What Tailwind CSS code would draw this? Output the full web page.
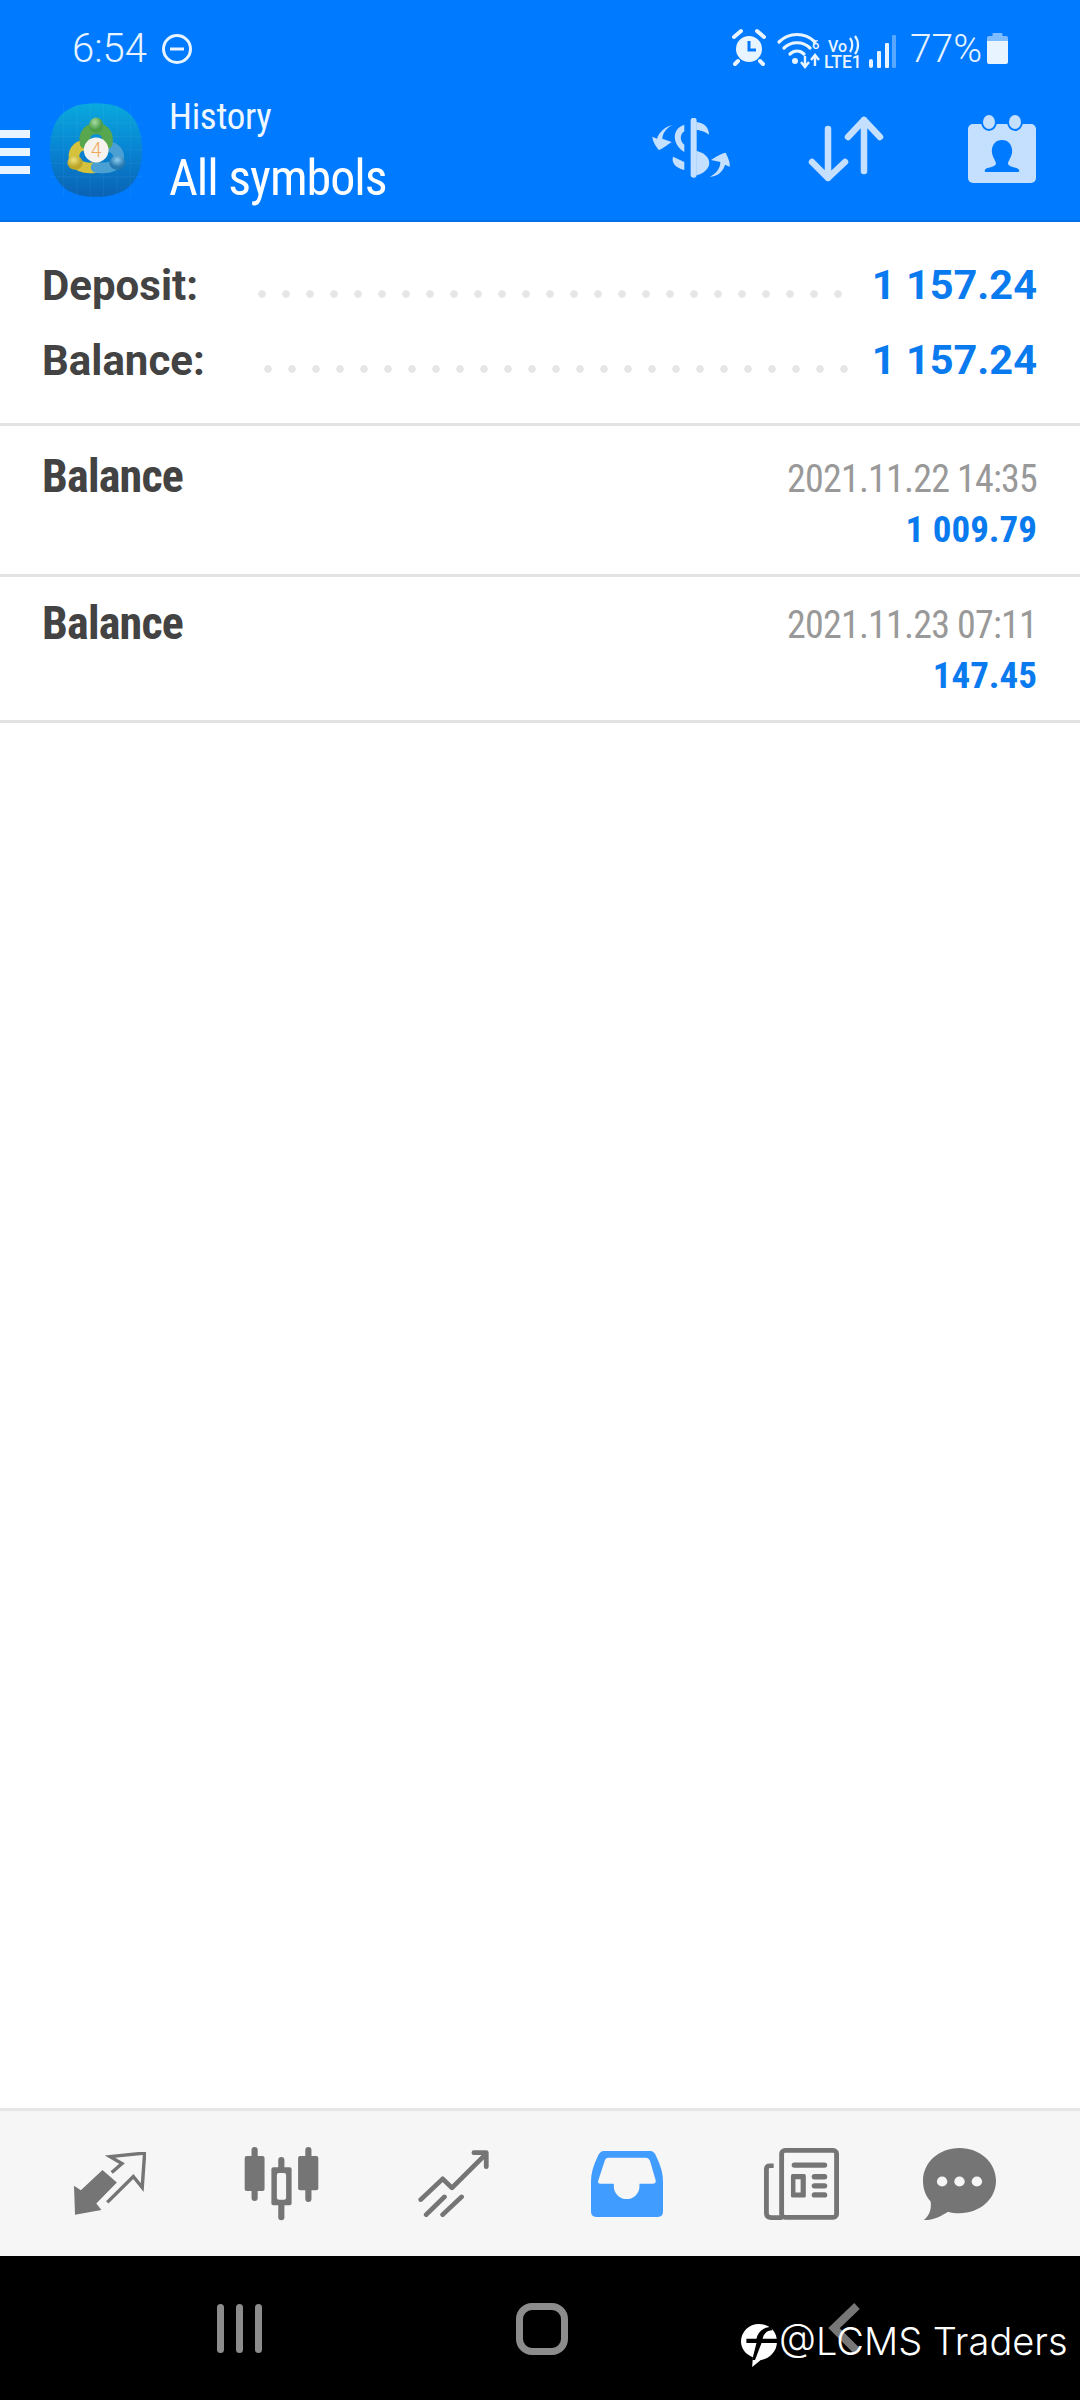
<!DOCTYPE html>
<html lang="en">
<head>
  <meta charset="UTF-8">
  <title>History</title>
  <script src="https://cdn.jsdelivr.net/npm/@tailwindcss/browser@4"></script>
</head>
<body class="[font-family:Roboto,sans-serif] bg-white">
<div class="relative w-[1080px] h-[2400px] flex flex-col overflow-hidden bg-white">

  <!-- Blue header -->
  <header class="h-[222px] bg-[#007aff] border-b-2 border-[#0670e8] shrink-0">
    <!-- Status bar -->
    <div class="h-[90px] flex text-[#e8f4ff]">
      <span class="ml-[72px] mt-[26px] text-[40px] leading-[46px] [font-weight:350]">6:54</span>
      <svg class="ml-[14px] mt-[33px]" width="32" height="32" viewBox="0 0 32 32" fill="none" stroke="#e8f4ff" stroke-width="3"><circle cx="16" cy="16" r="13.5"/><path d="M9 16H23"/></svg>
      <svg class="ml-[526px] mt-[20px]" width="200" height="60" viewBox="0 0 200 60">
        <!-- alarm -->
        <circle cx="30" cy="29" r="13" fill="#e8f4ff"/>
        <path d="M30 21V30H37" fill="none" stroke="#007aff" stroke-width="3"/>
        <path d="M15 17L22 11M45 17L38 11M19 41L16 44M41 41L44 44" stroke="#e8f4ff" stroke-width="4" stroke-linecap="round"/>
        <!-- wifi -->
        <g fill="none" stroke="#e8f4ff" stroke-width="3.2" stroke-linecap="round">
          <path d="M60 22C70 12 86 12 96 22"/>
          <path d="M65 28C72 21 84 21 91 28"/>
          <path d="M71 34C75 30 81 30 85 34"/>
        </g>
        <circle cx="76" cy="41" r="3" fill="#e8f4ff"/>
        <path d="M86 36V46M82 42L86 47L90 42M96 46V36M92 40L96 35L100 40" fill="none" stroke="#e8f4ff" stroke-width="2.4"/>
        <text x="93" y="29" font-size="13" font-weight="500" fill="#e8f4ff">6</text>
        <text x="109" y="32" font-size="16" font-weight="500" fill="#e8f4ff">Vo</text>
        <path d="M131 18C134 22 134 28 131 32M136 16C140 21 140 29 136 34" fill="none" stroke="#e8f4ff" stroke-width="2.2"/>
        <text x="105" y="48" font-size="17.5" font-weight="500" fill="#e8f4ff">LTE1</text>
        <!-- signal -->
        <rect x="150" y="39" width="4" height="9" rx="2" fill="#e8f4ff"/>
        <rect x="158" y="31" width="4" height="17" rx="1" fill="#e8f4ff"/>
        <rect x="166" y="23" width="4" height="25" rx="1" fill="#e8f4ff"/>
        <rect x="173" y="15" width="4" height="33" rx="1" fill="#58a8ff"/>
      </svg>
      <span class="-ml-[9px] mt-[26px] text-[39px] leading-[46px] font-light">77%</span>
      <svg class="ml-[5px] mt-[33px]" width="21" height="32" viewBox="0 0 21 32"><rect x="5.5" y="0" width="10" height="5" rx="1" fill="#7cbcff"/><path d="M2 3H19a2 2 0 0 1 2 2V8H0V5a2 2 0 0 1 2-2Z" fill="#7cbcff"/><path d="M0 8H21V29a2 2 0 0 1-2 2H2a2 2 0 0 1-2-2Z" fill="#e8f4ff"/></svg>
    </div>
    <!-- Toolbar -->
    <div class="h-[130px] flex items-start">
      <div class="w-[30px] mt-[40px] flex flex-col gap-[10px]">
        <div class="h-[8px] bg-[#e8f4ff]"></div>
        <div class="h-[8px] bg-[#e8f4ff]"></div>
        <div class="h-[8px] bg-[#e8f4ff]"></div>
      </div>
      <svg class="ml-[20px] mt-[13px] shrink-0" width="92" height="94" viewBox="60 40 275 280">
        <defs>
          <linearGradient id="tile" x1="0" y1="0" x2="0" y2="1"><stop offset="0" stop-color="#09a9de"/><stop offset="0.5" stop-color="#0884d2"/><stop offset="1" stop-color="#0a62b4"/></linearGradient>
          <radialGradient id="g1" cx="0.4" cy="0.3"><stop offset="0" stop-color="#a6dca0"/><stop offset="1" stop-color="#4a9c48"/></radialGradient>
          <radialGradient id="g2" cx="0.4" cy="0.3"><stop offset="0" stop-color="#efe37c"/><stop offset="1" stop-color="#bba62a"/></radialGradient>
          <radialGradient id="g3" cx="0.5" cy="0.3"><stop offset="0" stop-color="#8fcdee"/><stop offset="1" stop-color="#2578b0"/></radialGradient>
        </defs>
        <path d="M197 40C290 40 335 85 335 180C335 275 290 320 197 320C105 320 60 275 60 180C60 85 105 40 197 40Z" fill="url(#tile)"/>
        <path d="M100 40V320M140 40V320M180 40V320M220 40V320M260 40V320M300 40V320M60 100H335M60 140H335M60 180H335M60 220H335M60 260H335" stroke="#ffffff" stroke-opacity="0.07" stroke-width="2"/>
        <g fill="none" stroke-width="32" stroke-linecap="round">
          <path d="M168 165C138 165 125 190 135 215C150 236 175 236 200 232" stroke="#d4c23c"/>
          <path d="M230 168C258 172 272 192 262 215C250 234 225 236 198 232" stroke="#4aa0d2"/>
          <path d="M165 160C160 130 176 116 198 116C220 116 236 130 231 160" stroke="#58a64e"/>
        </g>
        <ellipse cx="198" cy="106" rx="21" ry="23" fill="url(#g1)"/>
        <ellipse cx="135" cy="218" rx="23" ry="21" fill="url(#g2)"/>
        <ellipse cx="261" cy="218" rx="24" ry="21" fill="url(#g3)"/>
        <circle cx="198" cy="180" r="37" fill="#f6f3ee"/>
        <text x="198" y="201" text-anchor="middle" font-size="58" font-weight="300" font-family="Roboto" fill="#f0a860">4</text>
      </svg>
      <div class="ml-[27px] mt-[5px] flex flex-col text-white font-stretch-condensed">
        <span class="text-[37px] leading-[44px] text-[#eef7ff] tracking-[-0.3px]">History</span>
        <span class="mt-[9px] text-[50px] leading-[60px] tracking-[-1px]">All symbols</span>
      </div>
      <svg class="ml-auto mt-[28px] shrink-0" width="80" height="62" viewBox="0 0 240 186" fill="#c5e0ff">
        <path d="M128 8V170" stroke="#c5e0ff" stroke-width="18" stroke-linecap="round"/>
        <path d="M136 12C158 14 174 28 174 50C166 44 150 36 136 36Z"/>
        <path d="M100 20C62 32 62 78 100 102V80C86 70 86 48 100 40Z"/>
        <path d="M66 116L100 132V156C76 150 60 136 66 116Z"/>
        <path d="M136 98C166 106 178 124 174 142C168 160 150 170 136 172Z"/>
        <path d="M66 20C45 30 35 45 34 62L62 72C48 82 30 95 24 96C14 85 5 70 4 56L18 62C24 42 42 26 66 20Z"/>
        <path d="M176 176C196 168 208 150 208 132L180 126C195 115 215 105 224 104C232 120 238 135 236 146L222 140C216 160 200 176 176 176Z"/>
      </svg>
      <svg class="ml-[74px] mt-[25px] shrink-0" width="81" height="69" viewBox="805 115 81 69" fill="none" stroke="#c5e0ff" stroke-width="6.5" stroke-linecap="round" stroke-linejoin="round">
        <path d="M828 129V178M812 162L828 178L845 162"/>
        <path d="M864 120V171M848 137L864 120L880 137"/>
      </svg>
      <svg class="ml-[82px] mt-[24px] shrink-0" width="68" height="70" viewBox="968 114 68 70">
        <rect x="968" y="124" width="68" height="59" rx="5" fill="#c5e0ff"/>
        <ellipse cx="989" cy="122" rx="7" ry="8" fill="#c5e0ff" stroke="#007aff" stroke-width="2"/>
        <ellipse cx="1015" cy="122" rx="7" ry="8" fill="#c5e0ff" stroke="#007aff" stroke-width="2"/>
        <path d="M1002 140C1009 140 1013 146 1012 153C1011 158 1008 161 1008 164C1010 168 1018 167 1019 170Q1020 172 1018 172H986Q984 172 985 170C986 167 994 168 996 164C996 161 993 158 992 153C991 146 995 140 1002 140Z" fill="#007aff"/>
      </svg>
      <div class="w-[44px] shrink-0"></div>
    </div>
  </header>

  <!-- Summary -->
  <section class="pt-[26px] px-[43px] border-b-[3px] border-[#e3e3e3] shrink-0 h-[204px]">
    <div class="h-[75px] flex items-center">
      <span class="-ml-[1px] w-[208px] text-[42px] font-bold text-[#434343]">Deposit:</span>
      <div class="w-[600px] h-[8px] mt-[16px] bg-[radial-gradient(circle,#e6e6e6_3.5px,transparent_4px)] bg-[length:24px_8px]"></div>
      <span class="ml-auto text-[41.5px] font-bold text-[#0a7aef]">1 157.24</span>
    </div>
    <div class="h-[75px] flex items-center">
      <span class="-ml-[1px] w-[214px] text-[42px] font-bold text-[#434343]">Balance:</span>
      <div class="w-[600px] h-[8px] mt-[16px] bg-[radial-gradient(circle,#e6e6e6_3.5px,transparent_4px)] bg-[length:24px_8px]"></div>
      <span class="ml-auto text-[41.5px] font-bold text-[#0a7aef]">1 157.24</span>
    </div>
  </section>

  <!-- Deals -->
  <section class="h-[151px] pl-[42px] pr-[43px] border-b-[3px] border-[#e3e3e3] flex justify-between shrink-0">
    <span class="mt-[23px] text-[46px] leading-[54px] font-bold text-[#434343] font-stretch-condensed tracking-[-0.8px]">Balance</span>
    <div class="mt-[30px] flex flex-col items-end">
      <span class="text-[38px] leading-[46px] text-[#999999] font-stretch-condensed tracking-[-0.8px]">2021.11.22 14:35</span>
      <span class="mt-[6px] text-[37px] leading-[44px] font-bold text-[#0a7aef] font-stretch-condensed">1 009.79</span>
    </div>
  </section>
  <section class="h-[146px] pl-[42px] pr-[43px] border-b-[3px] border-[#e3e3e3] flex justify-between shrink-0">
    <span class="mt-[19px] text-[46px] leading-[54px] font-bold text-[#434343] font-stretch-condensed tracking-[-0.8px]">Balance</span>
    <div class="mt-[25px] flex flex-col items-end">
      <span class="text-[38px] leading-[46px] text-[#999999] font-stretch-condensed tracking-[-0.8px]">2021.11.23 07:11</span>
      <span class="mt-[6px] text-[37px] leading-[44px] font-bold text-[#0a7aef] font-stretch-condensed">147.45</span>
    </div>
  </section>

  <div class="flex-1"></div>

  <!-- Bottom tabs -->
  <nav class="h-[148px] bg-[#f6f6f6] border-t-[3px] border-[#e6e6e6] flex items-center shrink-0 pl-[74px]">
    <svg width="72" height="63" viewBox="215 183 210 190" preserveAspectRatio="none" class="shrink-0">
      <path d="M215 285L235 298L298 237L340 275L280 338L295 358L218 372Z" fill="#757575"/>
      <path d="M325 245L355 218L320 197L421 186L414 290L388 257L312 335" fill="none" stroke="#757575" stroke-width="10"/>
    </svg>
    <svg width="75" height="74" viewBox="708 165 219 222" preserveAspectRatio="none" class="ml-[98px] shrink-0" fill="#757575">
      <rect x="710" y="192" width="58" height="105" rx="6"/><rect x="730" y="165" width="18" height="162" rx="9"/>
      <rect x="866" y="192" width="59" height="103" rx="6"/><rect x="887" y="165" width="18" height="165" rx="9"/>
      <rect x="808" y="195" width="18" height="190" rx="9"/>
      <rect x="788" y="226" width="59" height="114" rx="6"/>
      <rect x="804" y="243" width="27" height="80" rx="6" fill="#f6f6f6"/>
    </svg>
    <svg width="71" height="67" viewBox="1213 172 207 200" preserveAspectRatio="none" class="ml-[99px] shrink-0" fill="none" stroke="#757575" stroke-width="14" stroke-linecap="round" stroke-linejoin="round">
      <path d="M1221 320L1285 258L1312 285L1410 185"/>
      <path d="M1376 180H1412V222"/>
      <path d="M1237 365L1290 312M1285 365L1340 312"/>
    </svg>
    <svg width="72" height="66" viewBox="147 173 208 199" preserveAspectRatio="none" class="ml-[102px] shrink-0">
      <path fill="#409cff" fill-rule="evenodd" d="M185 173H318Q330 173 336 190Q355 230 355 265V355Q355 372 340 372H162Q147 372 147 355V265Q147 230 166 190Q172 173 185 173ZM198 193Q188 193 186 205L168 262Q165 272 175 272H213V280A37 38 0 0 0 287 280V272H325Q335 272 334 262L318 205Q315 193 305 193Z"/>
    </svg>
    <svg width="75" height="72" viewBox="647 165 217 215" preserveAspectRatio="none" class="ml-[101px] shrink-0">
      <g fill="none" stroke="#757575" stroke-width="14" stroke-linejoin="round">
        <rect x="698" y="172" width="159" height="200" rx="10"/>
        <path d="M675 218H664Q654 218 654 228V360Q654 373 668 373H700"/>
      </g>
      <g fill="#757575">
        <rect x="727" y="208" width="103" height="16" rx="8"/>
        <path fill-rule="evenodd" d="M730 243H763a5 5 0 0 1 5 5V308a5 5 0 0 1-5 5H730a5 5 0 0 1-5-5V248a5 5 0 0 1 5-5ZM738 258V298H753V258Z"/>
        <rect x="785" y="243" width="45" height="16" rx="8"/>
        <rect x="785" y="270" width="45" height="16" rx="8"/>
        <rect x="785" y="297" width="45" height="16" rx="8"/>
      </g>
    </svg>
    <svg width="73" height="72" viewBox="1108 165 210 215" preserveAspectRatio="none" class="ml-[84px] shrink-0">
      <path fill="#757575" d="M1213 165C1272 165 1318 208 1318 263C1318 318 1272 360 1213 360C1200 360 1190 358 1180 355C1160 368 1135 382 1110 380C1125 368 1133 350 1130 325C1115 308 1108 286 1108 263C1108 208 1154 165 1213 165Z"/>
      <circle cx="1163" cy="265" r="15" fill="#f6f6f6"/><circle cx="1213" cy="265" r="15" fill="#f6f6f6"/><circle cx="1263" cy="265" r="15" fill="#f6f6f6"/>
    </svg>
  </nav>

  <!-- Android nav bar -->
  <div class="h-[144px] bg-black flex shrink-0 pl-[217px]">
    <div class="mt-[48px] flex gap-[12px] shrink-0">
      <div class="w-[7px] h-[49px] rounded-full bg-[#8c8c8c]"></div>
      <div class="w-[7px] h-[49px] rounded-full bg-[#8c8c8c]"></div>
      <div class="w-[7px] h-[49px] rounded-full bg-[#8c8c8c]"></div>
    </div>
    <div class="ml-[254px] mt-[47px] w-[52px] h-[52px] rounded-[16px] border-[7px] border-[#8c8c8c] shrink-0"></div>
    <svg class="ml-[260px] mt-[47px] shrink-0" width="32" height="52" viewBox="0 0 32 52" fill="none" stroke="#777777" stroke-width="8"><path d="M29 3L6 25L29 48"/></svg>
  </div>

  <!-- Watermark over the nav bar -->
  <div class="absolute left-[741px] top-[2314px] flex items-center whitespace-nowrap">
    <svg class="shrink-0 mt-[10px]" width="36" height="43" viewBox="585 698 100 122" preserveAspectRatio="none">
      <path fill="#ffffff" d="M635 698C665 698 685 720 685 748C685 778 662 798 640 800L616 820L618 792C598 785 585 768 585 748C585 720 607 698 635 698Z"/>
      <path fill="#000000" d="M600 740H628C631 722 645 708 668 706L672 716C655 716 648 728 645 740H685V752H642L624 800H616L628 752H600Z"/>
    </svg>
    <span class="ml-[2px] text-[38px] leading-[48px] font-light text-white [font-family:Inter,sans-serif]">@LCMS Traders</span>
  </div>
</div>
</body>
</html>
